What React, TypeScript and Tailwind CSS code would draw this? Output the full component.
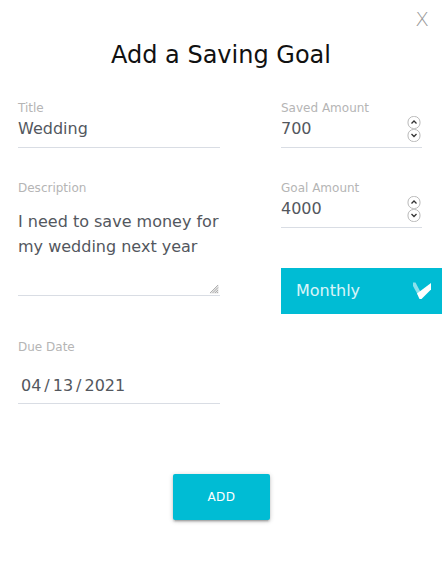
import React from "react";

function Spinner() {
  return (
    <svg width="14" height="26" viewBox="0 0 14 26" className="mr-[1px]">
      <rect x="1" y="0.5" width="12" height="12" rx="5.5" fill="white" stroke="#b9b9b9" />
      <path d="M4.5 7.5 L7 5 L9.5 7.5" fill="none" stroke="#333" strokeWidth="1.3" />
      <rect x="1" y="13.5" width="12" height="12" rx="5.5" fill="white" stroke="#b9b9b9" />
      <path d="M4.5 18 L7 20.5 L9.5 18" fill="none" stroke="#333" strokeWidth="1.3" />
    </svg>
  );
}

function Field({ label, value, spinner }: { label: string; value: string; spinner?: boolean }) {
  return (
    <div className="flex flex-col">
      <div className="text-[12px] leading-[16px] text-[#b5b5b5]">{label}</div>
      <div className="mt-[1px] h-[31px] flex items-start justify-between border-b border-[#d9dde4]">
        <span className="text-[16px] leading-[24px] text-[#53575e]">{value}</span>
        {spinner && (
          <div className="h-[24px] flex items-center">
            <Spinner />
          </div>
        )}
      </div>
    </div>
  );
}

export default function App() {
  return (
    <div className="relative w-[442px] h-[569px] bg-white font-['DejaVu_Sans',sans-serif] overflow-hidden">
      <div className="absolute right-[13px] top-[7px] text-[20px] leading-[24px] font-extralight text-[#9a9a9a]">X</div>
      <div className="pt-[39px] text-center text-[24px] leading-[32px] text-[#111]">Add a Saving Goal</div>
      <div className="mt-[29px] flex">
        <div className="ml-[18px] w-[202px] flex flex-col">
          <Field label="Title" value="Wedding" />
          <div className="mt-[32px] text-[12px] leading-[16px] text-[#b5b5b5]">Description</div>
          <div className="relative mt-[13px]">
            <textarea
              className="block w-[202px] h-[87px] p-0 resize-none text-[16px] leading-[25px] text-[#53575e] border-0 border-b border-[#d9dde4] outline-none bg-white"
              defaultValue="I need to save money for my wedding next year"
            />
            <svg width="10" height="10" viewBox="0 0 10 10" className="absolute right-[1px] bottom-[2px]">
              <path d="M9.5 0.5 L9.5 9.5 L0.5 9.5 Z" fill="#e4e4e4" />
              <path d="M9 1 L1 9 M9 3.5 L3.5 9 M9 6 L6 9 M9 8 L8 9" stroke="#a8a8a8" strokeWidth="0.9" />
            </svg>
          </div>
          <div className="mt-[43px] text-[12px] leading-[16px] text-[#b5b5b5]">Due Date</div>
          <div className="mt-[19px] pl-[3px] pb-[5px] border-b border-[#d9dde4] flex text-[16px] leading-[24px] text-[#53575e]">
            <span>04</span>
            <span className="px-[3px]">/</span>
            <span>13</span>
            <span className="px-[3px]">/</span>
            <span>2021</span>
          </div>
        </div>
        <div className="ml-[61px] w-[141px] flex flex-col">
          <Field label="Saved Amount" value="700" spinner />
          <div className="mt-[32px]">
            <Field label="Goal Amount" value="4000" spinner />
          </div>
          <div className="mt-[40px] w-[161px] h-[46px] bg-[#00bcd4] flex items-center justify-between pl-[15px] pr-[10px]">
            <span className="text-[16px] text-white/85">Monthly</span>
            <svg width="20" height="20" viewBox="0 0 20 20">
              <path d="M1 1.5 L3.5 1.5 L8.5 11 L6.5 15 L1 5 Z" fill="white" fillOpacity="0.55" />
              <path d="M5 12.5 L19 2 L19 8.5 L9.5 18 L7.5 18 Z" fill="white" />
            </svg>
          </div>
        </div>
      </div>
      <div className="mt-[70px] flex justify-center">
        <button className="ml-[1px] w-[97px] h-[46px] rounded-[2px] bg-[#00bcd4] text-white text-[12px] tracking-[0.5px] shadow-[0_2px_2px_0_rgba(0,0,0,0.14),0_3px_1px_-2px_rgba(0,0,0,0.12),0_1px_5px_0_rgba(0,0,0,0.2)]">
          ADD
        </button>
      </div>
    </div>
  );
}
